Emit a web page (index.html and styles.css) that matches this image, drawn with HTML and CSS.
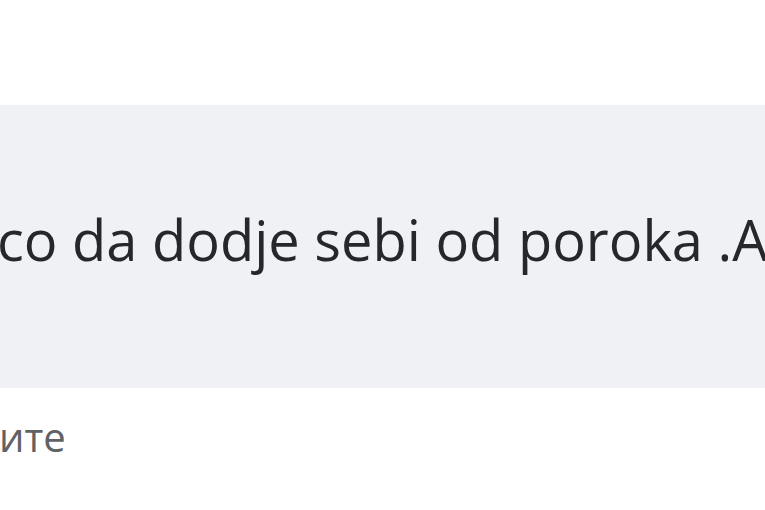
FILE: index.html
```html
<!DOCTYPE html>
<html lang="sr">

<head>
    <meta charset="UTF-8">
    <meta name="viewport" content="width=device-width, initial-scale=1.0">
    <title>Komentar</title>
    <link rel="stylesheet" href="styles.css">
</head>

<body>
    <div class="page">
        <div class="top"></div>
        <div class="bubble">
            <p class="bubble-text">co da dodje sebi od poroka .A</p>
        </div>
        <div class="actions">
            <span class="reply">ите</span>
        </div>
    </div>
</body>

</html>
```

FILE: styles.css
```css
* {
    margin: 0;
    padding: 0;
    box-sizing: border-box;
}

body {
    background-color: #fff;
    font-family: "Open Sans", "Noto Sans", sans-serif;
    overflow: hidden;
}

.page {
    width: 765px;
    height: 510px;
    overflow: hidden;
}

.top {
    height: 105px;
}

.bubble {
    height: 283px;
    background-color: #f0f1f5;
    display: flex;
    align-items: center;
    overflow: hidden;
}

.bubble-text {
    font-size: 56px;
    color: #26272b;
    white-space: nowrap;
    margin-left: -3px;
    margin-top: -16px;
}

.actions {
    padding-top: 21px;
    white-space: nowrap;
}

.reply {
    font-size: 40px;
    color: #606266;
    margin-left: -1px;
}
```
